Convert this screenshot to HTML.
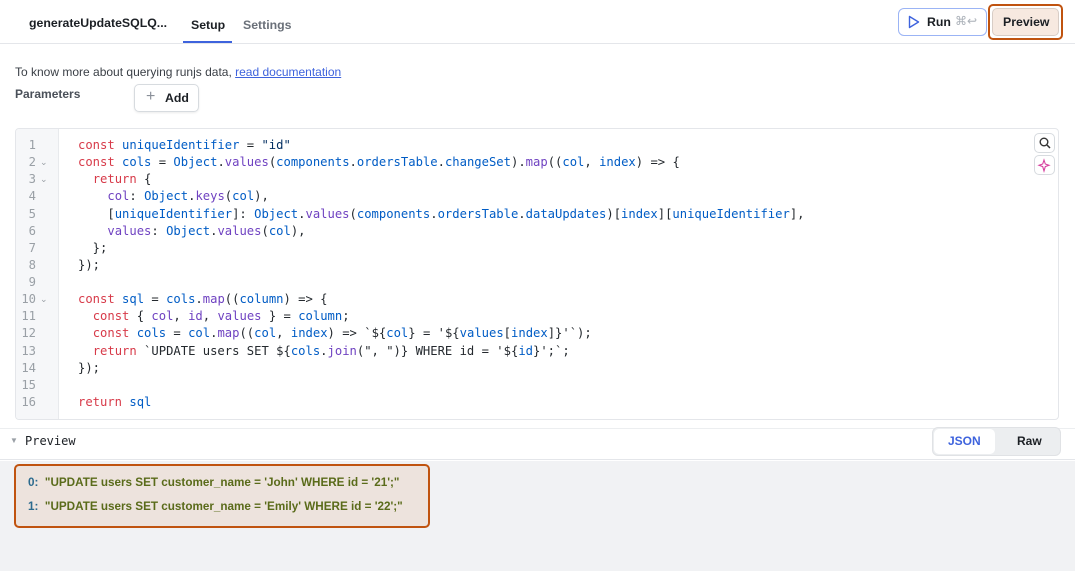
<!DOCTYPE html>
<html><head><style>
*{box-sizing:border-box;margin:0;padding:0}
body{width:1075px;height:571px;overflow:hidden;background:#fff;font-family:"Liberation Sans",sans-serif;position:relative;color:#1b1f24}
.abs{position:absolute}
.code{font-family:"DejaVu Sans Mono",monospace;font-size:12.2px;line-height:17.13px;white-space:pre}
.k{color:#d73a49}.f{color:#005cc5}.p{color:#6f42c1}.t{color:#24292e}.s{color:#032f62}
.ln{color:#9aa0a6;text-align:right;width:22px;font-family:"DejaVu Sans Mono",monospace;font-size:12.2px;line-height:17.13px}
</style></head><body>
<div class="abs" style="left:0;top:0;width:1075px;height:44px;border-bottom:1px solid #e4e6ea"></div>
<div class="abs" style="left:29px;top:16px;font-size:12.3px;font-weight:bold;color:#1b1f24">generateUpdateSQLQ...</div>
<div class="abs" style="left:191px;top:18px;font-size:12.3px;font-weight:bold">Setup</div>
<div class="abs" style="left:183px;top:41px;width:49px;height:2px;background:#3e63dd"></div>
<div class="abs" style="left:243px;top:18px;font-size:12.3px;color:#6a7079;font-weight:bold">Settings</div>
<div class="abs" style="left:898px;top:8px;width:89px;height:28px;border:1px solid #9bb4f5;border-radius:6px"></div>
<svg class="abs" style="left:908px;top:15px" width="12" height="14"><path d="M1.5 1.5 L10.5 7 L1.5 12.5 Z" fill="none" stroke="#3e63dd" stroke-width="1.4" stroke-linejoin="round"/></svg>
<div class="abs" style="left:927px;top:15px;font-size:12.3px;font-weight:bold">Run</div>
<div class="abs" style="left:955px;top:14px;font-size:12px;color:#aab0b8">⌘↩</div>
<div class="abs" style="left:988px;top:4px;width:75px;height:36px;border:2px solid #c0530f;border-radius:5px"></div>
<div class="abs" style="left:992px;top:8px;width:67px;height:28px;border:1px solid #d8cdc6;border-radius:5px;background:#f7e9e0"></div>
<div class="abs" style="left:1003px;top:15px;font-size:12.3px;font-weight:bold">Preview</div>
<div class="abs" style="left:15px;top:65px;font-size:12px;color:#3a3f46">To know more about querying runjs data, <span style="color:#3e63dd;text-decoration:underline">read documentation</span></div>
<div class="abs" style="left:15px;top:87px;font-size:12px;color:#4a5059;font-weight:bold">Parameters</div>
<div class="abs" style="left:134px;top:84px;width:65px;height:28px;border:1px solid #d7dbdf;border-radius:5px;box-shadow:0 1px 2px rgba(0,0,0,.08)"></div>
<div class="abs" style="left:146px;top:88px;font-size:16px;color:#8a9099">+</div>
<div class="abs" style="left:165px;top:91px;font-size:12.3px;font-weight:bold">Add</div>
<div class="abs" style="left:15px;top:128px;width:1044px;height:292px;border:1px solid #e4e6ea;border-radius:4px;overflow:hidden">
<div class="abs" style="left:0;top:0;width:43px;height:100%;background:#f6f7f9;border-right:1px solid #e8eaed"></div>
</div>
<div class="abs" style="left:14px;top:137px"><div class="ln">1</div><div class="ln">2</div><div class="ln">3</div><div class="ln">4</div><div class="ln">5</div><div class="ln">6</div><div class="ln">7</div><div class="ln">8</div><div class="ln">9</div><div class="ln">10</div><div class="ln">11</div><div class="ln">12</div><div class="ln">13</div><div class="ln">14</div><div class="ln">15</div><div class="ln">16</div></div>
<div class="abs" style="left:40px;top:154px;font-size:9px;color:#9aa0a6;line-height:17.13px">⌄<br>⌄<br><br><br><br><br><br><br>⌄</div>
<div class="abs code t" style="left:78px;top:137px"><span class="k">const</span> <span class="f">uniqueIdentifier</span> = <span class="s">"id"</span>
<span class="k">const</span> <span class="f">cols</span> = <span class="f">Object</span>.<span class="p">values</span>(<span class="f">components</span>.<span class="f">ordersTable</span>.<span class="f">changeSet</span>).<span class="p">map</span>((<span class="f">col</span>, <span class="f">index</span>) => {
  <span class="k">return</span> {
    <span class="p">col</span>: <span class="f">Object</span>.<span class="p">keys</span>(<span class="f">col</span>),
    [<span class="f">uniqueIdentifier</span>]: <span class="f">Object</span>.<span class="p">values</span>(<span class="f">components</span>.<span class="f">ordersTable</span>.<span class="f">dataUpdates</span>)[<span class="f">index</span>][<span class="f">uniqueIdentifier</span>],
    <span class="p">values</span>: <span class="f">Object</span>.<span class="p">values</span>(<span class="f">col</span>),
  };
});

<span class="k">const</span> <span class="f">sql</span> = <span class="f">cols</span>.<span class="p">map</span>((<span class="f">column</span>) => {
  <span class="k">const</span> { <span class="p">col</span>, <span class="p">id</span>, <span class="p">values</span> } = <span class="f">column</span>;
  <span class="k">const</span> <span class="f">cols</span> = <span class="f">col</span>.<span class="p">map</span>((<span class="f">col</span>, <span class="f">index</span>) => `${<span class="f">col</span>} = '${<span class="f">values</span>[<span class="f">index</span>]}'`);
  <span class="k">return</span> `UPDATE users SET ${<span class="f">cols</span>.<span class="p">join</span>(", ")} WHERE id = '${<span class="f">id</span>}';`;
});

<span class="k">return</span> <span class="f">sql</span></div>
<div class="abs" style="left:1034px;top:133px;width:21px;height:20px;border:1px solid #d7dbdf;border-radius:5px;background:#fff"></div>
<svg class="abs" style="left:1038px;top:136px" width="14" height="14"><circle cx="6" cy="6" r="3.8" fill="none" stroke="#333" stroke-width="1.4"/><path d="M9 9 L12 12" stroke="#333" stroke-width="1.5"/></svg>
<div class="abs" style="left:1034px;top:155px;width:21px;height:20px;border:1px solid #d7dbdf;border-radius:5px;background:#fff"></div>
<svg class="abs" style="left:1037px;top:158px" width="15" height="15"><path d="M7 2 L8.3 6 L12 7.3 L8.3 8.6 L7 13 L5.7 8.6 L2 7.3 L5.7 6 Z" fill="none" stroke="#d6409f" stroke-width="1.1"/></svg>
<div class="abs" style="left:0;top:428px;width:1075px;height:32px;border-bottom:1px solid #e4e6ea;border-top:1px solid #eceef0"></div>
<div class="abs" style="left:10px;top:436px;font-size:8px;color:#9aa0a6">▼</div>
<div class="abs" style="left:25px;top:434px;font-family:'DejaVu Sans Mono',monospace;font-size:12px;color:#1b1f24">Preview</div>
<div class="abs" style="left:932px;top:427px;width:129px;height:29px;background:#eceef0;border:1px solid #e0e2e5;border-radius:6px"></div>
<div class="abs" style="left:934px;top:429px;width:61px;height:25px;background:#fff;border-radius:5px"></div>
<div class="abs" style="left:948px;top:434px;font-size:12px;font-weight:bold;color:#3e63dd">JSON</div>
<div class="abs" style="left:1017px;top:434px;font-size:12px;font-weight:bold;color:#1b1f24">Raw</div>
<div class="abs" style="left:0;top:461px;width:1075px;height:110px;background:#f1f2f4"></div>
<div class="abs" style="left:14px;top:464px;width:416px;height:64px;background:#ede3dd;border:2px solid #c0530f;border-radius:5px"></div>
<div class="abs" style="left:28px;top:471px;font-size:11.7px;color:#5a6b1a;line-height:24px;font-weight:bold"><span style="color:#2b6a8e">0:</span>&nbsp; "UPDATE users SET customer_name = 'John' WHERE id = '21';"<br><span style="color:#2b6a8e">1:</span>&nbsp; "UPDATE users SET customer_name = 'Emily' WHERE id = '22';"</div>
</body></html>
